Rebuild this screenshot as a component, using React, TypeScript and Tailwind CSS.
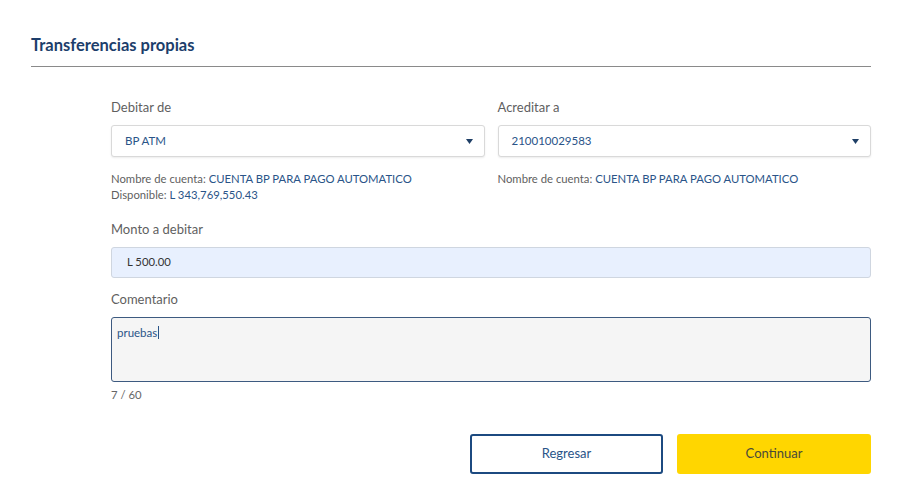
import React from "react";

const font = { fontFamily: "Lato, 'Open Sans', sans-serif" };

function Caret() {
  return (
    <svg width="7" height="5" viewBox="0 0 7 5" className="shrink-0">
      <path d="M0 0 L7 0 L3.5 5 Z" fill="#1f3f66" />
    </svg>
  );
}

function SelectBox({ value }: { value: string }) {
  return (
    <div className="flex h-[32px] items-center justify-between rounded-[3px] border border-[#d9d9d9] bg-white pl-[13px] pr-[11px] shadow-[0_1px_2px_rgba(0,0,0,0.08)]">
      <span className="text-[11.5px] text-[#2a5488]">{value}</span>
      <Caret />
    </div>
  );
}

export default function App() {
  return (
    <div className="min-h-screen w-[905px] bg-white" style={font}>
      <div className="pl-[31px] pr-[34px] pt-[34px]">
        <h1 className="text-[16.5px] font-bold leading-[22px] text-[#1c3e6b]">Transferencias propias</h1>
        <div className="mt-[10px] h-px bg-[#8a8a8a]" />
      </div>

      <div className="ml-[111px] mr-[34px] mt-[31px]">
        <div className="grid grid-cols-2 gap-x-[13px]">
          <div>
            <div className="text-[13px] leading-[18px] text-[#5f5f5f]">Debitar de</div>
            <div className="mt-[9px]">
              <SelectBox value="BP ATM" />
            </div>
            <div className="mt-[14px] text-[11.3px] leading-[16px] text-[#5f5f5f]">
              Nombre de cuenta: <span className="text-[#2a5488]">CUENTA BP PARA PAGO AUTOMATICO</span>
            </div>
            <div className="text-[11.3px] leading-[16px] text-[#5f5f5f]">
              Disponible: <span className="text-[#2a5488]">L 343,769,550.43</span>
            </div>
          </div>
          <div>
            <div className="text-[13px] leading-[18px] text-[#5f5f5f]">Acreditar a</div>
            <div className="mt-[9px]">
              <SelectBox value="210010029583" />
            </div>
            <div className="mt-[14px] text-[11.3px] leading-[16px] text-[#5f5f5f]">
              Nombre de cuenta: <span className="text-[#2a5488]">CUENTA BP PARA PAGO AUTOMATICO</span>
            </div>
          </div>
        </div>

        <div className="mt-[17px] text-[13px] leading-[18px] text-[#5f5f5f]">Monto a debitar</div>
        <div className="mt-[9px] flex h-[31px] items-center rounded-[3px] border border-[#cfd6e0] bg-[#e8f0fe] pl-[15px] text-[11.3px] text-[#333]">
          L 500.00
        </div>

        <div className="mt-[12px] text-[13px] leading-[18px] text-[#5f5f5f]">Comentario</div>
        <div className="mt-[9px] h-[65px] rounded-[3px] border border-[#3d5a80] bg-[#f5f5f5] px-[5px] pt-[7px] text-[11.5px] leading-[16px]">
          <span className="text-[#2a5488]">pruebas</span>
          <span className="ml-px inline-block h-[13px] w-px bg-[#2a5488] align-[-2px]" />
        </div>
        <div className="mt-[5px] text-[11.3px] leading-[16px] text-[#666]">7 / 60</div>

        <div className="mt-[31px] flex justify-end gap-[14px]">
          <button className="h-[40px] w-[193px] rounded-[3px] border-2 border-[#1c4a80] bg-white text-[13px] text-[#2a5488]">
            Regresar
          </button>
          <button className="h-[40px] w-[194px] rounded-[3px] bg-[#ffd600] text-[13px] text-[#4a4a3a]">
            Continuar
          </button>
        </div>
      </div>
    </div>
  );
}
